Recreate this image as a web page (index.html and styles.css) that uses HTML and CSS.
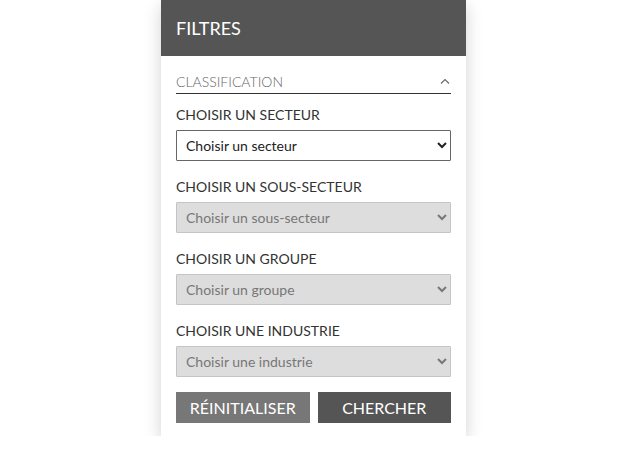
FILE: index.html
```html
<!DOCTYPE html>
<html lang="fr">
<head>
  <meta charset="UTF-8" />
  <meta name="viewport" content="width=device-width, initial-scale=1.0"/>
  <title>Filtres</title>
  <link rel="stylesheet" href="styles.css">
</head>
<body>
  <div class="panel">
    <div class="panel-header">FILTRES</div>

    <form class="panel-body" id="filterForm">
      <div class="section-title">
        <span>CLASSIFICATION</span>
        <svg class="caret" width="10" height="6" viewBox="0 0 10 6">
          <path d="M1 5.5 L5 1.5 L9 5.5" fill="none" stroke="#666" stroke-width="1.1"/>
        </svg>
      </div>

      <div class="field">
        <label for="secteur">CHOISIR UN SECTEUR</label>
        <select id="secteur">
          <option>Choisir un secteur</option>
        </select>
      </div>

      <div class="field">
        <label for="sousSecteur">CHOISIR UN SOUS-SECTEUR</label>
        <select id="sousSecteur" disabled>
          <option>Choisir un sous-secteur</option>
        </select>
      </div>

      <div class="field">
        <label for="groupe">CHOISIR UN GROUPE</label>
        <select id="groupe" disabled>
          <option>Choisir un groupe</option>
        </select>
      </div>

      <div class="field">
        <label for="industrie">CHOISIR UNE INDUSTRIE</label>
        <select id="industrie" disabled>
          <option>Choisir une industrie</option>
        </select>
      </div>

      <div class="actions">
        <button type="reset" class="btn btn-reset">RÉINITIALISER</button>
        <button type="submit" class="btn btn-search">CHERCHER</button>
      </div>
    </form>
  </div>
</body>
</html>
```

FILE: styles.css
```css
* {
  margin: 0;
  padding: 0;
  box-sizing: border-box;
}

body {
  font-family: 'Lato', 'Liberation Sans', sans-serif;
  background: #fff;
  color: #333;
}

.panel {
  width: 305px;
  margin-left: 161px;
  background: #fff;
  box-shadow: 0 6px 16px rgba(0, 0, 0, 0.18);
}

.panel-header {
  height: 56px;
  background: #555;
  color: #fff;
  font-size: 18px;
  line-height: 56px;
  padding: 0 15px;
}

.panel-body {
  padding: 14px 15px 13px;
}

.section-title {
  display: flex;
  justify-content: space-between;
  align-items: center;
  height: 24px;
  border-bottom: 1px solid #333;
  font-size: 14px;
  font-weight: 300;
  color: #666;
  padding-bottom: 1px;
}

.caret {
  margin-right: 1px;
}

.field {
  margin-top: 12px;
}

.field + .field {
  margin-top: 17px;
}

label {
  display: block;
  font-size: 14px;
  line-height: 18px;
  color: #333;
  margin-bottom: 6px;
}

select {
  width: 100%;
  height: 31px;
  font-family: 'Lato', 'Liberation Sans', sans-serif;
  font-size: 14px;
  color: #222;
  background: #fff;
  border: 1px solid #666;
  border-radius: 1px;
  padding: 0 5px;
}

select:disabled {
  background: #ddd;
  border-color: #c4c4c4;
  color: #777;
  opacity: 1;
}

.actions {
  display: flex;
  gap: 8px;
  margin-top: 15px;
}

.btn {
  flex: 1;
  height: 31px;
  border: none;
  color: #fff;
  font-family: 'Lato', 'Liberation Sans', sans-serif;
  font-size: 16px;
  cursor: pointer;
}

.btn-reset {
  background: #777;
}

.btn-search {
  background: #555;
}
```
